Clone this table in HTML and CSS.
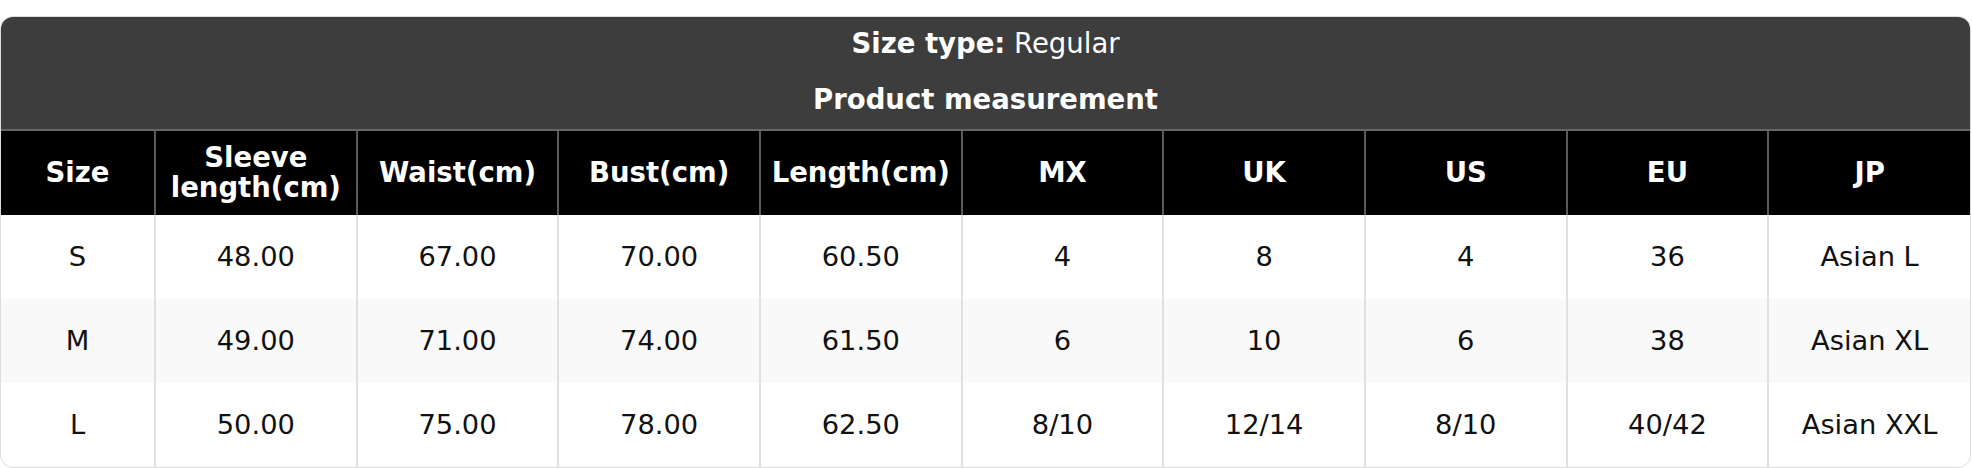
FILE: index.html
```html
<!DOCTYPE html>
<html lang="en">
<head>
<meta charset="utf-8">
<title>Size chart</title>
<link rel="stylesheet" href="styles.css">
</head>
<body>
<div class="chart">
  <table class="size-table">
    <colgroup>
      <col class="c-first">
      <col span="9" class="c-rest">
    </colgroup>
    <thead>
      <tr class="title-row">
        <th colspan="10" class="title t1"><b>Size type:</b> <span class="reg">Regular</span></th>
      </tr>
      <tr class="title-row">
        <th colspan="10" class="title t2">Product measurement</th>
      </tr>
      <tr class="head-row">
        <th>Size</th>
        <th>Sleeve<br>length(cm)</th>
        <th>Waist(cm)</th>
        <th>Bust(cm)</th>
        <th>Length(cm)</th>
        <th>MX</th>
        <th>UK</th>
        <th>US</th>
        <th>EU</th>
        <th>JP</th>
      </tr>
    </thead>
    <tbody>
      <tr>
        <td>S</td><td>48.00</td><td>67.00</td><td>70.00</td><td>60.50</td><td>4</td><td>8</td><td>4</td><td>36</td><td>Asian L</td>
      </tr>
      <tr class="alt">
        <td>M</td><td>49.00</td><td>71.00</td><td>74.00</td><td>61.50</td><td>6</td><td>10</td><td>6</td><td>38</td><td>Asian XL</td>
      </tr>
      <tr>
        <td>L</td><td>50.00</td><td>75.00</td><td>78.00</td><td>62.50</td><td>8/10</td><td>12/14</td><td>8/10</td><td>40/42</td><td>Asian XXL</td>
      </tr>
    </tbody>
  </table>
</div>
</body>
</html>
```

FILE: styles.css
```css
html, body {
  margin: 0;
  padding: 0;
  background: #ffffff;
}

body {
  font-family: "DejaVu Sans", Verdana, sans-serif;
  padding-top: 16px;
}

.chart {
  width: 1971px;
  box-sizing: border-box;
  border: 1px solid #dddddd;
  border-radius: 13px;
  overflow: hidden;
  background: #ffffff;
}

.size-table {
  width: 100%;
  border-collapse: collapse;
  table-layout: fixed;
}

.c-first { width: 154px; }

.title {
  background: #3d3d3d;
  color: #ffffff;
  font-size: 27.5px;
  text-align: center;
  padding: 0 0 4px 0;
  height: 52px;
}

.t1 { font-weight: normal; vertical-align: middle; }
.t1 b { font-weight: bold; }
.t2 { font-weight: bold; }

.head-row th {
  background: #000000;
  color: #ffffff;
  font-size: 27.5px;
  font-weight: bold;
  line-height: 30px;
  height: 82px;
  padding: 0 0 2px 0;
  text-align: center;
  border-top: 2px solid #666666;
  border-left: 2px solid #5a5a5a;
}

.head-row th:first-child { border-left: none; }

tbody td {
  font-size: 27.3px;
  color: #111111;
  text-align: center;
  height: 83px;
  padding: 0 0 1px 0;
  border-left: 2px solid #e0e0e0;
}

tbody td:first-child { border-left: none; }

tbody tr.alt td { background: #f9f9f9; }
```
